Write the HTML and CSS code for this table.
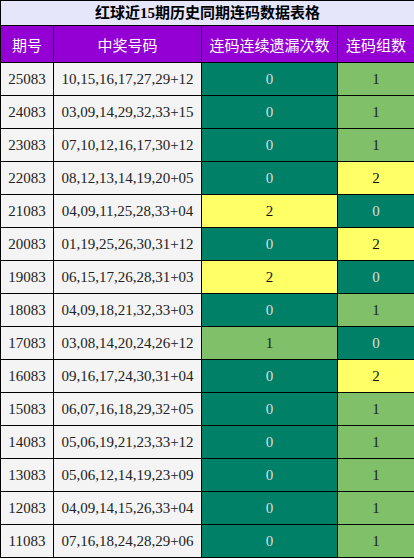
FILE: index.html
```html
<!DOCTYPE html>
<html lang="zh">
<head>
    <meta charset="UTF-8">
    <meta name="viewport" content="width=device-width, initial-scale=1.0">
    <title>红球近15期历史同期连码数据表格</title>
    <link rel="stylesheet" href="styles.css">
</head>
<body>
    <table class="lotto">
        <colgroup>
            <col class="c1">
            <col class="c2">
            <col class="c3">
            <col class="c4">
        </colgroup>
        <tr class="title">
            <th colspan="4">红球近15期历史同期连码数据表格</th>
        </tr>
        <tr class="head">
            <th>期号</th>
            <th>中奖号码</th>
            <th>连码连续遗漏次数</th>
            <th>连码组数</th>
        </tr>
        <tr><td>25083</td><td>10,15,16,17,27,29+12</td><td class="teal">0</td><td class="green">1</td></tr>
        <tr><td>24083</td><td>03,09,14,29,32,33+15</td><td class="teal">0</td><td class="green">1</td></tr>
        <tr><td>23083</td><td>07,10,12,16,17,30+12</td><td class="teal">0</td><td class="green">1</td></tr>
        <tr><td>22083</td><td>08,12,13,14,19,20+05</td><td class="teal">0</td><td class="yellow">2</td></tr>
        <tr><td>21083</td><td>04,09,11,25,28,33+04</td><td class="yellow">2</td><td class="teal">0</td></tr>
        <tr><td>20083</td><td>01,19,25,26,30,31+12</td><td class="teal">0</td><td class="yellow">2</td></tr>
        <tr><td>19083</td><td>06,15,17,26,28,31+03</td><td class="yellow">2</td><td class="teal">0</td></tr>
        <tr><td>18083</td><td>04,09,18,21,32,33+03</td><td class="teal">0</td><td class="green">1</td></tr>
        <tr><td>17083</td><td>03,08,14,20,24,26+12</td><td class="green">1</td><td class="teal">0</td></tr>
        <tr><td>16083</td><td>09,16,17,24,30,31+04</td><td class="teal">0</td><td class="yellow">2</td></tr>
        <tr><td>15083</td><td>06,07,16,18,29,32+05</td><td class="teal">0</td><td class="green">1</td></tr>
        <tr><td>14083</td><td>05,06,19,21,23,33+12</td><td class="teal">0</td><td class="green">1</td></tr>
        <tr><td>13083</td><td>05,06,12,14,19,23+09</td><td class="teal">0</td><td class="green">1</td></tr>
        <tr><td>12083</td><td>04,09,14,15,26,33+04</td><td class="teal">0</td><td class="green">1</td></tr>
        <tr><td>11083</td><td>07,16,18,24,28,29+06</td><td class="teal">0</td><td class="green">1</td></tr>
    </table>
</body>
</html>
```

FILE: styles.css
```css
html, body{ margin:0; padding:0; background:#fff;}
body{ font-family:"Liberation Serif", "Noto Sans CJK SC", serif;}

.lotto{
    width:414px;
    border-collapse:collapse;
    table-layout:fixed;
    font-size:15px;
}
.lotto .c1{ width:53px;}
.lotto .c2{ width:148px;}
.lotto .c3{ width:136px;}
.lotto .c4{ width:77px;}

.lotto th, .lotto td{
    border:1px solid #000;
    padding:0;
    text-align:center;
    white-space:nowrap;
}

.title th{
    height:24px;
    background:#e6e6fa;
    color:#000;
    font-weight:bold;
    line-height:24px;
}

.head th{
    height:36px;
    background:#9400d3;
    color:#fff;
    font-weight:normal;
    font-family:"Noto Sans CJK SC", sans-serif;
}

.lotto td{
    height:32px;
    background:#f4f4f4;
    color:#222;
}
.lotto td.teal{ background:#008066; color:#ddd;}
.lotto td.green{ background:#80c068; color:#222;}
.lotto td.yellow{ background:#ffff66; color:#111;}
```
